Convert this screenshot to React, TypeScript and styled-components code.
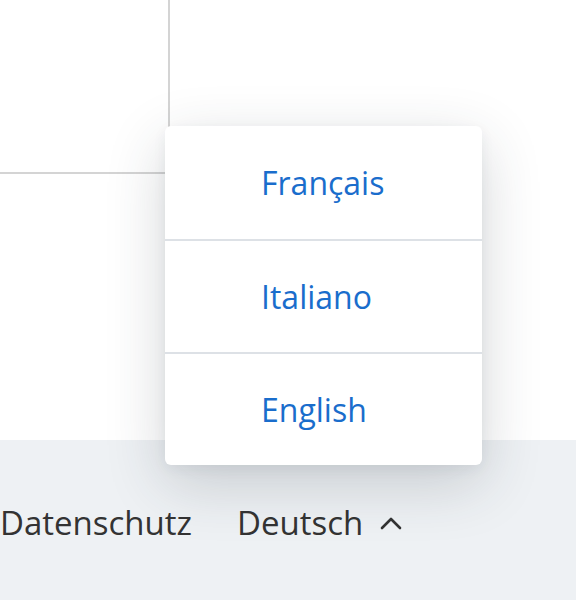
import React from "react";
import styled, { createGlobalStyle } from "styled-components";

const Global = createGlobalStyle`
  html, body { margin: 0; padding: 0; background: #ffffff; }
  body { font-family: "Open Sans", "Noto Sans", sans-serif; }
  #root { width: 576px; height: 600px; overflow: hidden; }
`;

const Page = styled.div`
  position: relative;
  width: 576px;
  height: 600px;
  display: flex;
  flex-direction: column;
  overflow: hidden;
`;

const Content = styled.main`
  height: 440px;
  background: #ffffff;
  display: grid;
  grid-template-columns: 170px 1fr;
  grid-template-rows: 174px 1fr;
`;

const Cell = styled.div<{ $right?: boolean; $bottom?: boolean }>`
  border-right: ${(p) => (p.$right ? "2px solid #d4d4d4" : "none")};
  border-bottom: ${(p) => (p.$bottom ? "2px solid #d4d4d4" : "none")};
`;

const Footer = styled.footer`
  flex: 1;
  background: #eef1f4;
  display: flex;
  align-items: flex-start;
  padding-top: 61px;
  padding-left: 0;
  gap: 45px;
  box-sizing: border-box;
`;

const FooterLink = styled.span`
  font-size: 33px;
  line-height: 44px;
  color: #333333;
  display: flex;
  align-items: center;
  gap: 17px;
  white-space: nowrap;
`;

const Menu = styled.ul`
  position: absolute;
  left: 165px;
  top: 126px;
  width: 317px;
  margin: 0;
  padding: 0;
  list-style: none;
  background: #ffffff;
  border-radius: 6px;
  box-shadow: 0 18px 60px rgba(40, 50, 60, 0.2), 0 4px 14px rgba(40, 50, 60, 0.06);
  overflow: hidden;
`;

const MenuItem = styled.li`
  height: 113px;
  box-sizing: border-box;
  display: flex;
  align-items: center;
  padding-left: 96px;
  font-size: 32px;
  color: #1a6dcc;
  & + & {
    border-top: 2px solid #dde1e6;
  }
`;

const Chevron = () => (
  <svg width="22" height="14" viewBox="0 0 22 14" fill="none">
    <polyline
      points="2,12 11,3 20,12"
      stroke="#333333"
      strokeWidth="2.6"
      strokeLinecap="round"
      strokeLinejoin="round"
    />
  </svg>
);

export default function App() {
  const languages = ["Français", "Italiano", "English"];
  return (
    <Page>
      <Global />
      <Content>
        <Cell $right $bottom />
        <Cell />
        <Cell />
        <Cell />
      </Content>
      <Footer>
        <FooterLink>Datenschutz</FooterLink>
        <FooterLink>
          Deutsch
          <Chevron />
        </FooterLink>
      </Footer>
      <Menu>
        {languages.map((l) => (
          <MenuItem key={l}>{l}</MenuItem>
        ))}
      </Menu>
    </Page>
  );
}
